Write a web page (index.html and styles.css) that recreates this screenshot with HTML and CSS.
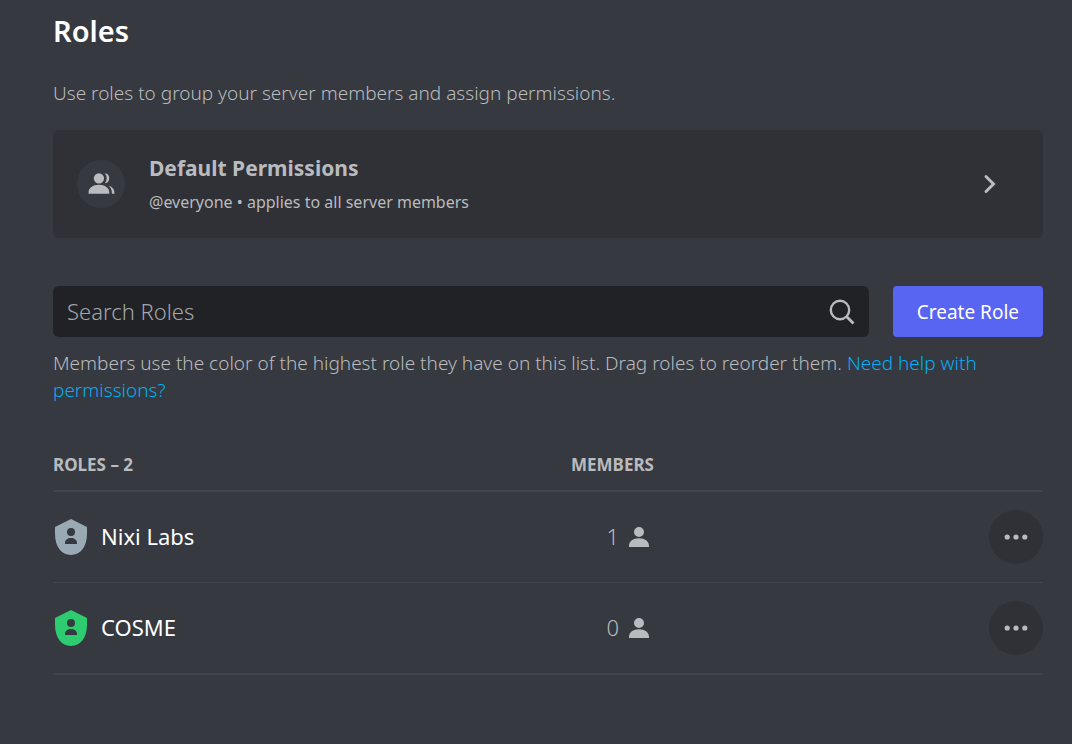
FILE: index.html
```html
<!DOCTYPE html>
<html lang="en">
<head>
<meta charset="utf-8">
<meta name="viewport" content="width=device-width, initial-scale=1">
<title>Roles</title>
<link rel="stylesheet" href="styles.css">
</head>
<body>
<main class="page">
  <h1 class="title">Roles</h1>
  <p class="text intro">Use roles to group your server members and assign permissions.</p>

  <button class="card" type="button">
    <span class="card-icon">
      <svg width="31" height="31" viewBox="0 0 24 24" fill="currentColor" aria-hidden="true">
        <path d="M14 8a4 4 0 1 1-8 0a4 4 0 0 1 8 0ZM2 19c0-3.53 3.29-6 8-6s8 2.47 8 6v1H2v-1Z"/>
        <path d="M20 20h2v-1c0-2.56-1.73-4.56-4.48-5.47C19.06 14.91 20 16.8 20 19v1Z"/>
        <path d="M14.88 11.9A4 4 0 0 0 18 8a4 4 0 0 0-3.5-3.97A6 6 0 0 1 16 8a6 6 0 0 1-1.36 3.8l.24.1Z"/>
      </svg>
    </span>
    <span class="card-body">
      <span class="card-title">Default Permissions</span>
      <span class="card-note">@everyone • applies to all server members</span>
    </span>
    <svg class="chevron" width="14" height="22" viewBox="0 0 14 22" fill="none" stroke="currentColor" stroke-width="3" aria-hidden="true">
      <path d="M3 3.500l7.500 7.500l-7.500 7.500" stroke-linecap="round"/>
    </svg>
  </button>

  <div class="toolbar">
    <label class="search">
      <input class="search-input" type="text" placeholder="Search Roles" aria-label="Search Roles">
      <svg class="search-icon" width="26" height="26" viewBox="0 0 26 26" fill="none" stroke="currentColor" stroke-width="2.4" aria-hidden="true">
        <circle cx="11" cy="11" r="9.2"/>
        <path d="M17.5 17.5l7 7" stroke-width="2.8"/>
      </svg>
    </label>
    <button class="create" type="button">Create Role</button>
  </div>

  <p class="text hint">Members use the color of the highest role they have on this list. Drag roles to reorder them. <a class="link" href="#help">Need help with permissions?</a></p>

  <table class="roles">
    <thead>
      <tr>
        <th class="col-role" scope="col">ROLES – 2</th>
        <th class="col-members" scope="col">MEMBERS</th>
        <td class="col-menu"></td>
      </tr>
    </thead>
    <tbody>
      <tr>
        <td>
          <div class="role">
            <svg class="shield shield-gray" width="36" height="36" viewBox="0 0 36 36" fill="currentColor" fill-rule="evenodd" aria-hidden="true">
              <path d="M18 0L34 8V15C34 27.5 27.5 36 18 36S2 27.5 2 15V8ZM18 9a4 4 0 1 0 0 8a4 4 0 0 0 0-8ZM12 25h12v-1c0-3-2.500-5-6-5s-6 2-6 5Z"/>
            </svg>
            <span class="role-name">Nixi Labs</span>
          </div>
        </td>
        <td>
          <div class="members">
            <span class="count">1</span>
            <svg width="20" height="20" viewBox="2 4 16 16" fill="currentColor" role="img" aria-label="members">
              <path d="M14 8a4 4 0 1 1-8 0a4 4 0 0 1 8 0ZM2 19c0-3.530 3.290-6 8-6s8 2.470 8 6v1H2v-1Z"/>
            </svg>
          </div>
        </td>
        <td>
          <button class="more" type="button" aria-label="More options for Nixi Labs">
            <svg width="24" height="6" viewBox="0 0 24 6" fill="currentColor" aria-hidden="true"><circle cx="3.200" cy="3" r="2.600"/><circle cx="12" cy="3" r="2.600"/><circle cx="20.800" cy="3" r="2.600"/></svg>
          </button>
        </td>
      </tr>
      <tr>
        <td>
          <div class="role">
            <svg class="shield shield-green" width="36" height="36" viewBox="0 0 36 36" fill="currentColor" fill-rule="evenodd" aria-hidden="true">
              <path d="M18 0L34 8V15C34 27.5 27.5 36 18 36S2 27.5 2 15V8ZM18 9a4 4 0 1 0 0 8a4 4 0 0 0 0-8ZM12 25h12v-1c0-3-2.500-5-6-5s-6 2-6 5Z"/>
            </svg>
            <span class="role-name">COSME</span>
          </div>
        </td>
        <td>
          <div class="members">
            <span class="count">0</span>
            <svg width="20" height="20" viewBox="2 4 16 16" fill="currentColor" role="img" aria-label="members">
              <path d="M14 8a4 4 0 1 1-8 0a4 4 0 0 1 8 0ZM2 19c0-3.530 3.290-6 8-6s8 2.470 8 6v1H2v-1Z"/>
            </svg>
          </div>
        </td>
        <td>
          <button class="more" type="button" aria-label="More options for COSME">
            <svg width="24" height="6" viewBox="0 0 24 6" fill="currentColor" aria-hidden="true"><circle cx="3.200" cy="3" r="2.600"/><circle cx="12" cy="3" r="2.600"/><circle cx="20.800" cy="3" r="2.600"/></svg>
          </button>
        </td>
      </tr>
    </tbody>
  </table>
</main>
</body>
</html>
```
FILE: styles.css
```css
* {
  box-sizing: border-box;
}

body {
  margin: 0;
  background: #36393f;
  color: #b9bbbe;
  font-family: "Noto Sans", "Open Sans", sans-serif;
  font-size: 19px;
  font-weight: 300;
}

button,
input {
  font: inherit;
  color: inherit;
  border: 0;
}

.page {
  padding: 16px 29px 48px 53px;
}

.title {
  margin: 0;
  color: #fff;
  font-size: 29px;
  font-weight: 600;
  line-height: 30px;
}

.text {
  margin: 0;
  line-height: 27px;
}

.intro {
  margin-top: 34px;
}

.card {
  display: flex;
  align-items: center;
  gap: 24px;
  width: 100%;
  margin-top: 23px;
  padding: 23px 46px 24px 24px;
  border-radius: 6px;
  background: #2f3136;
  text-align: left;
}

.card-icon {
  display: flex;
  align-items: center;
  justify-content: center;
  width: 48px;
  height: 48px;
  border-radius: 50%;
  background: #36393f;
}

.card-body {
  display: flex;
  flex: 1;
  flex-direction: column;
}

.card-title {
  font-size: 21px;
  font-weight: 700;
  line-height: 31px;
}

.card-note {
  padding-top: 6px;
  font-size: 16px;
  font-weight: 400;
  line-height: 24px;
}

.toolbar {
  display: flex;
  gap: 24px;
  margin-top: 48px;
}

.search {
  display: flex;
  flex: 1;
  align-items: center;
  padding: 0 14px;
  border-radius: 6px;
  background: #202225;
}

.search-input {
  flex: 1;
  min-width: 0;
  padding: 0 0 2px;
  background: transparent;
  outline: 0;
  font-size: 22px;
}

.search-input::placeholder {
  color: #a3a6aa;
  opacity: 1;
}

.create {
  padding: 13px 24px 11px;
  border-radius: 4px;
  background: #5865f2;
  color: #fff;
  font-weight: 400;
  line-height: 27px;
}

.hint {
  margin-top: 13px;
}

.link {
  color: #00aff4;
  text-decoration: none;
}

.roles {
  width: 100%;
  margin-top: 48px;
  border-collapse: separate;
  border-spacing: 0;
  table-layout: fixed;
}

.roles th,
.roles td {
  padding: 0;
  border-bottom: 2px solid #41444b;
  text-align: left;
}

.roles th {
  height: 40px;
  padding-bottom: 12px;
  font-size: 17px;
  font-weight: 700;
  line-height: 24px;
}

.roles tbody td {
  height: 92px;
}

.roles tbody tr:not(:last-child) td {
  height: 91px;
  border-bottom-width: 1px;
}

.col-members {
  width: 83px;
}

.col-menu {
  width: 389px;
}

.role,
.members {
  display: flex;
  align-items: center;
  gap: 12px;
  font-size: 22px;
  line-height: 30px;
}

.role {
  color: #fff;
  font-weight: 400;
}

.role-name,
.count {
  padding-bottom: 2px;
}

.members {
  justify-content: flex-end;
  gap: 10px;
  padding-right: 5px;
}

.shield-gray {
  color: #99aab5;
}

.shield-green {
  color: #2ecc71;
}

.more {
  display: flex;
  align-items: center;
  justify-content: center;
  width: 54px;
  height: 54px;
  margin-left: auto;
  padding: 0;
  border-radius: 50%;
  background: #2f3136;
}
```
